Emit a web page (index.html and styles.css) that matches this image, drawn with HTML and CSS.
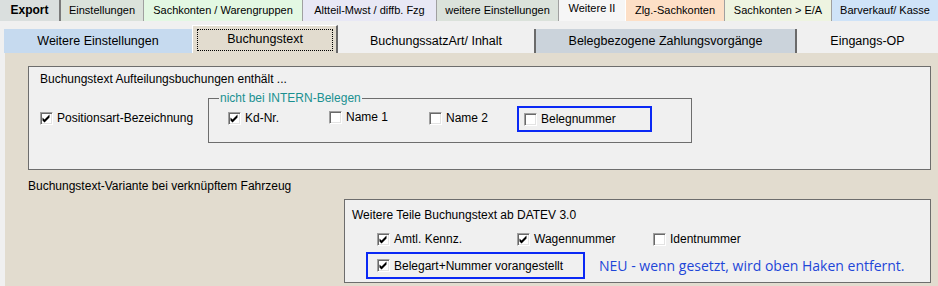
FILE: index.html
```html
<!DOCTYPE html>
<html lang="de">
<head>
  <meta charset="UTF-8" />
  <title>Export - Buchungstext</title>
  <link rel="stylesheet" href="styles.css">
</head>
<body>

<!-- Haupt-Reiter -->
<div class="tabs-top">
  <div class="ttab t-export">Export</div>
  <div class="ttab t-einst">Einstellungen</div>
  <div class="ttab t-sach">Sachkonten / Warengruppen</div>
  <div class="ttab t-alt">Altteil-Mwst / diffb. Fzg</div>
  <div class="ttab t-weit">weitere Einstellungen</div>
  <div class="ttab t-weit2 active">Weitere II</div>
  <div class="ttab t-zlg">Zlg.-Sachkonten</div>
  <div class="ttab t-ea">Sachkonten &gt; E/A</div>
  <div class="ttab t-bar">Barverkauf/ Kasse</div>
</div>

<!-- Unter-Reiter -->
<div class="tabs-sub">
  <div class="stab s-weit">Weitere Einstellungen</div>
  <div class="stab s-buch active"><span class="focus">Buchungstext</span></div>
  <div class="stab s-satz">BuchungssatzArt/ Inhalt</div>
  <div class="stab s-beleg">Belegbezogene Zahlungsvorgänge</div>
  <div class="stab s-op">Eingangs-OP</div>
</div>

<div class="panel">
  <div class="group group-auft">
    <div class="group-title">Buchungstext Aufteilungsbuchungen enthält ...</div>
    <div class="auft-row">
      <label class="check check-pos"><span class="cb"><svg viewBox="0 0 11 11"><path d="M1.5 4.5 L3.5 6.5 L8.5 1.5 L8.5 4.5 L3.5 9.5 L1.5 7.5 Z" /></svg></span>Positionsart-Bezeichnung</label>
      <fieldset class="intern">
        <legend>nicht bei INTERN-Belegen</legend>
        <label class="check w-kd"><span class="cb"><svg viewBox="0 0 11 11"><path d="M1.5 4.5 L3.5 6.5 L8.5 1.5 L8.5 4.5 L3.5 9.5 L1.5 7.5 Z" /></svg></span>Kd-Nr.</label>
        <label class="check w-n1 up"><span class="cb"></span>Name 1</label>
        <label class="check w-n2"><span class="cb"></span>Name 2</label>
        <label class="check mark mark-beleg"><span class="cb"></span>Belegnummer</label>
      </fieldset>
    </div>
  </div>

  <div class="variant-title">Buchungstext-Variante bei verknüpftem Fahrzeug</div>

  <div class="group group-datev">
    <div class="group-title">Weitere Teile Buchungstext ab DATEV 3.0</div>
    <div class="datev-row">
      <label class="check w-amtl"><span class="cb"><svg viewBox="0 0 11 11"><path d="M1.5 4.5 L3.5 6.5 L8.5 1.5 L8.5 4.5 L3.5 9.5 L1.5 7.5 Z" /></svg></span>Amtl. Kennz.</label>
      <label class="check w-wagen"><span class="cb"><svg viewBox="0 0 11 11"><path d="M1.5 4.5 L3.5 6.5 L8.5 1.5 L8.5 4.5 L3.5 9.5 L1.5 7.5 Z" /></svg></span>Wagennummer</label>
      <label class="check"><span class="cb"></span>Identnummer</label>
    </div>
    <div class="datev-row2">
      <label class="check mark mark-belegart"><span class="cb"><svg viewBox="0 0 11 11"><path d="M1.5 4.5 L3.5 6.5 L8.5 1.5 L8.5 4.5 L3.5 9.5 L1.5 7.5 Z" /></svg></span>Belegart+Nummer vorangestellt</label>
      <span class="hint">NEU - wenn gesetzt, wird oben Haken entfernt.</span>
    </div>
  </div>
</div>

</body>
</html>
```

FILE: styles.css
```css
body {
  margin: 0;
  padding: 0;
  width: 938px;
  height: 286px;
  overflow: hidden;
  background-color: #f0f0f0;
  font-family: "Liberation Sans", Arial, sans-serif;
  font-size: 12px;
  color: #000;
}

/* Haupt-Reiter */
.tabs-top {
  display: flex;
  height: 21px;
  font-size: 11px;
}

.ttab {
  box-sizing: border-box;
  height: 21px;
  line-height: 20px;
  text-align: center;
  border-right: 1px solid #a0a0a0;
  white-space: nowrap;
}

.ttab.active {
  line-height: 17px;
  border-right: 1px solid #fff;
}

.t-export { width: 61px; background-color: #dadfde; font-weight: bold; font-size: 12px; border-right: 2px solid #7a7a7a; }
.t-einst  { width: 83px; background-color: #dbe2db; }
.t-sach   { width: 159px; background-color: #e3f8e3; }
.t-alt    { width: 134px; background-color: #e8e8f5; }
.t-weit   { width: 122px; background-color: #dbe2db; }
.t-weit2  { width: 67px; background-color: #f6f6f6; }
.t-zlg    { width: 99px; background-color: #fddfc6; }
.t-ea     { width: 107px; background-color: #eef4e1; }
.t-bar    { flex: 1; background-color: #cfe3f8; border-right: none; }

/* Unter-Reiter */
.tabs-sub {
  display: flex;
  align-items: flex-end;
  height: 32px;
  padding-left: 4px;
  font-size: 12.5px;
}

.stab {
  box-sizing: border-box;
  height: 24px;
  line-height: 24px;
  text-align: center;
  white-space: nowrap;
}

.stab.active {
  height: 28px;
  line-height: 22px;
  padding: 3px 3px 0 4px;
  border-top: 1px solid #fff;
  border-left: 1px solid #fff;
  border-right: 2px solid #6a6a6a;
}

.focus {
  display: block;
  height: 20px;
  line-height: 19px;
  border: 1px dotted #000;
}

.s-weit  { width: 188px; background-color: #c6daef; }
.s-buch  { width: 146px; background-color: #e2dccf; }
.s-satz  { width: 198px; background-color: #f0f0f0; border-right: 2px solid #6a6a6a; }
.s-beleg { width: 261px; background-color: #cbd3db; border-right: 2px solid #6a6a6a; }
.s-op    { flex: 1; background-color: #f0f0f0; }

/* Inhalt */
.panel {
  margin-left: 5px;
  height: 233px;
  padding-top: 13px;
  box-sizing: border-box;
  background-color: #e2dccf;
}

.group {
  box-sizing: border-box;
  background-color: #f0f0f0;
  border: 1px solid #6d6d6d;
}

.group-title {
  line-height: 14px;
}

.group-auft {
  margin: 0 7px 0 23px;
  height: 104px;
  padding: 5px 0 0 11px;
}

.auft-row {
  display: flex;
  align-items: flex-start;
  margin-top: 6px;
}

.check {
  display: flex;
  align-items: center;
  height: 14px;
  line-height: 14px;
  white-space: nowrap;
}

.cb {
  box-sizing: border-box;
  width: 13px;
  height: 13px;
  margin-right: 4px;
  background-color: #fff;
  border-top: 1px solid #a0a0a0;
  border-left: 1px solid #a0a0a0;
  border-right: 1px solid #fff;
  border-bottom: 1px solid #fff;
  box-shadow: inset 1px 1px 0 #696969, inset -1px -1px 0 #e3e3e3;
  flex-shrink: 0;
}

.cb svg {
  display: block;
  width: 11px;
  height: 11px;
}

.cb svg path {
  fill: #000;
}

.check-pos {
  width: 168px;
  margin-top: 19px;
}

fieldset.intern {
  display: flex;
  align-items: flex-start;
  margin: 0;
  width: 484px;
  height: 51px;
  box-sizing: border-box;
  padding: 0 0 0 19px;
  border: 1px solid #6d6d6d;
}

fieldset.intern legend {
  margin-left: -9px;
  padding: 0 1px;
  color: #1a9090;
  line-height: 12px;
}

.intern .check {
  margin-top: 7px;
}

.intern .up {
  margin-top: 6px;
}

.w-kd { width: 101px; }
.w-n1 { width: 100px; }
.w-n2 { width: 88px; }

.mark {
  box-sizing: border-box;
  border: 2px solid #0a28f5;
}

.intern .mark-beleg {
  width: 135px;
  height: 26px;
  margin-top: 2px;
  padding-left: 5px;
}

.variant-title {
  margin: 9px 0 0 23px;
  line-height: 14px;
}

.group-datev {
  margin: 6px 7px 0 339px;
  height: 84px;
  padding: 8px 0 0 7px;
}

.datev-row {
  display: flex;
  margin: 10px 0 0 25px;
}

.w-amtl  { width: 140px; }
.w-wagen { width: 136px; }

.datev-row2 {
  display: flex;
  align-items: center;
  margin: 6px 0 0 14px;
}

.mark-belegart {
  width: 219px;
  height: 27px;
  padding-left: 9px;
}

.hint {
  margin-left: 14px;
  color: #1e46d8;
  font-family: "Open Sans", "Noto Sans", sans-serif;
  font-size: 14px;
}
```
